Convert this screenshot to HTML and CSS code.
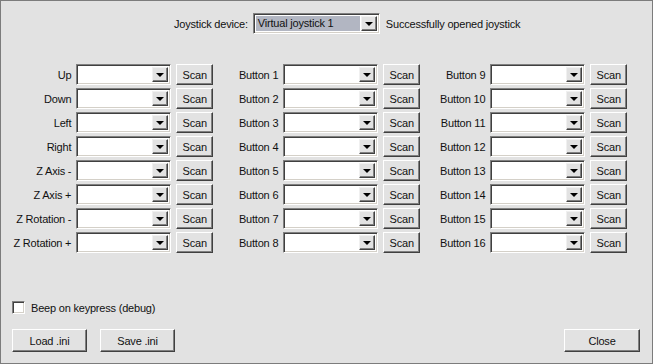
FILE: index.html
```html
<!DOCTYPE html>
<html lang="en">
<head>
    <meta charset="UTF-8">
    <title>Joystick setup</title>
    <link rel="stylesheet" href="styles.css">
</head>
<body>

<div class="dialog">
    <div class="device">
        <span>Joystick device:</span>
        <div class="combo wide">
            <div class="value selected">Virtual joystick 1</div>
            <div class="arrow"><i></i></div>
        </div>
        <span>Successfully opened joystick</span>
    </div>

    <div class="bindings">
        <div class="bind"><label>Up</label><div class="combo"><div class="value"></div><div class="arrow"><i></i></div></div><button class="btn scan">Scan</button></div>
        <div class="bind"><label>Button 1</label><div class="combo"><div class="value"></div><div class="arrow"><i></i></div></div><button class="btn scan">Scan</button></div>
        <div class="bind"><label>Button 9</label><div class="combo"><div class="value"></div><div class="arrow"><i></i></div></div><button class="btn scan">Scan</button></div>

        <div class="bind"><label>Down</label><div class="combo"><div class="value"></div><div class="arrow"><i></i></div></div><button class="btn scan">Scan</button></div>
        <div class="bind"><label>Button 2</label><div class="combo"><div class="value"></div><div class="arrow"><i></i></div></div><button class="btn scan">Scan</button></div>
        <div class="bind"><label>Button 10</label><div class="combo"><div class="value"></div><div class="arrow"><i></i></div></div><button class="btn scan">Scan</button></div>

        <div class="bind"><label>Left</label><div class="combo"><div class="value"></div><div class="arrow"><i></i></div></div><button class="btn scan">Scan</button></div>
        <div class="bind"><label>Button 3</label><div class="combo"><div class="value"></div><div class="arrow"><i></i></div></div><button class="btn scan">Scan</button></div>
        <div class="bind"><label>Button 11</label><div class="combo"><div class="value"></div><div class="arrow"><i></i></div></div><button class="btn scan">Scan</button></div>

        <div class="bind"><label>Right</label><div class="combo"><div class="value"></div><div class="arrow"><i></i></div></div><button class="btn scan">Scan</button></div>
        <div class="bind"><label>Button 4</label><div class="combo"><div class="value"></div><div class="arrow"><i></i></div></div><button class="btn scan">Scan</button></div>
        <div class="bind"><label>Button 12</label><div class="combo"><div class="value"></div><div class="arrow"><i></i></div></div><button class="btn scan">Scan</button></div>

        <div class="bind"><label>Z Axis -</label><div class="combo"><div class="value"></div><div class="arrow"><i></i></div></div><button class="btn scan">Scan</button></div>
        <div class="bind"><label>Button 5</label><div class="combo"><div class="value"></div><div class="arrow"><i></i></div></div><button class="btn scan">Scan</button></div>
        <div class="bind"><label>Button 13</label><div class="combo"><div class="value"></div><div class="arrow"><i></i></div></div><button class="btn scan">Scan</button></div>

        <div class="bind"><label>Z Axis +</label><div class="combo"><div class="value"></div><div class="arrow"><i></i></div></div><button class="btn scan">Scan</button></div>
        <div class="bind"><label>Button 6</label><div class="combo"><div class="value"></div><div class="arrow"><i></i></div></div><button class="btn scan">Scan</button></div>
        <div class="bind"><label>Button 14</label><div class="combo"><div class="value"></div><div class="arrow"><i></i></div></div><button class="btn scan">Scan</button></div>

        <div class="bind"><label>Z Rotation -</label><div class="combo"><div class="value"></div><div class="arrow"><i></i></div></div><button class="btn scan">Scan</button></div>
        <div class="bind"><label>Button 7</label><div class="combo"><div class="value"></div><div class="arrow"><i></i></div></div><button class="btn scan">Scan</button></div>
        <div class="bind"><label>Button 15</label><div class="combo"><div class="value"></div><div class="arrow"><i></i></div></div><button class="btn scan">Scan</button></div>

        <div class="bind"><label>Z Rotation +</label><div class="combo"><div class="value"></div><div class="arrow"><i></i></div></div><button class="btn scan">Scan</button></div>
        <div class="bind"><label>Button 8</label><div class="combo"><div class="value"></div><div class="arrow"><i></i></div></div><button class="btn scan">Scan</button></div>
        <div class="bind"><label>Button 16</label><div class="combo"><div class="value"></div><div class="arrow"><i></i></div></div><button class="btn scan">Scan</button></div>
    </div>

    <div class="beep">
        <span class="check"></span>
        <span>Beep on keypress (debug)</span>
    </div>

    <div class="actions">
        <button class="btn big">Load .ini</button>
        <button class="btn big">Save .ini</button>
        <button class="btn big close">Close</button>
    </div>
</div>

</body>
</html>
```

FILE: styles.css
```css
*{
    margin: 0;
    padding: 0;
    box-sizing: border-box;
    font-family: 'Liberation Sans', Arial, sans-serif;
}

body{
    background: #e2e2e2;
    font-size: 11px;
    letter-spacing: -0.2px;
    color: #111;
}

.dialog{
    width: 653px;
    height: 364px;
    background: #e2e2e2;
    border: 1px solid #7c7c7c;
}

/* top line */
.device{
    display: flex;
    align-items: center;
    padding: 12px 0 0 173px;
    height: 33px;
}

.device span:first-child{
    margin-right: 5px;
}

.device span:last-child{
    margin-left: 6px;
}

/* combo box */
.combo{
    display: flex;
    width: 96px;
    height: 21px;
    padding: 2px;
    background: #fff;
    border: 1px solid;
    border-color: #808080 #fff #fff #808080;
    box-shadow: inset 1px 1px #404040, inset -1px -1px #d4d0c8;
}

.combo.wide{
    width: 127px;
}

.combo .value{
    flex: 1;
    line-height: 15px;
    padding-left: 2px;
}

.combo .value.selected{
    background: #b2b6c2;
    margin-right: 1px;
}

.combo .arrow{
    width: 16px;
    height: 15px;
    background: #e2e2e2;
    border: 1px solid;
    border-color: #f0f0f0 #404040 #404040 #f0f0f0;
    box-shadow: inset -1px -1px #808080;
    display: flex;
    align-items: center;
    justify-content: center;
}

.arrow i{
    width: 0;
    height: 0;
    border-left: 4px solid transparent;
    border-right: 4px solid transparent;
    border-top: 4px solid #000;
    margin-top: 1px;
}

/* buttons */
.btn{
    background: #e2e2e2;
    border: 1px solid;
    border-color: #fff #404040 #404040 #fff;
    box-shadow: inset -1px -1px #808080;
    font-size: 11px;
    letter-spacing: -0.2px;
    color: #111;
}

.scan{
    width: 37px;
    height: 21px;
    margin-left: 5px;
}

/* grid of bindings */
.bindings{
    display: grid;
    grid-template-columns: repeat(3, 207px);
    row-gap: 3px;
    padding-left: 5px;
    margin-top: 30px;
}

.bind{
    display: flex;
    align-items: center;
}

.bind label{
    width: 66px;
    margin-right: 5px;
    text-align: right;
    white-space: nowrap;
}

/* checkbox */
.beep{
    display: flex;
    align-items: center;
    margin: 48px 0 0 11px;
    height: 13px;
}

.check{
    width: 13px;
    height: 13px;
    background: #fff;
    border: 1px solid;
    border-color: #808080 #fff #fff #808080;
    box-shadow: inset 1px 1px #404040, inset -1px -1px #d4d0c8;
    margin-right: 6px;
}

/* bottom buttons */
.actions{
    display: flex;
    margin: 15px 12px 0 11px;
}

.big{
    width: 75px;
    height: 23px;
    margin-right: 13px;
}

.close{
    width: 76px;
    margin-left: auto;
    margin-right: 0;
}
```
